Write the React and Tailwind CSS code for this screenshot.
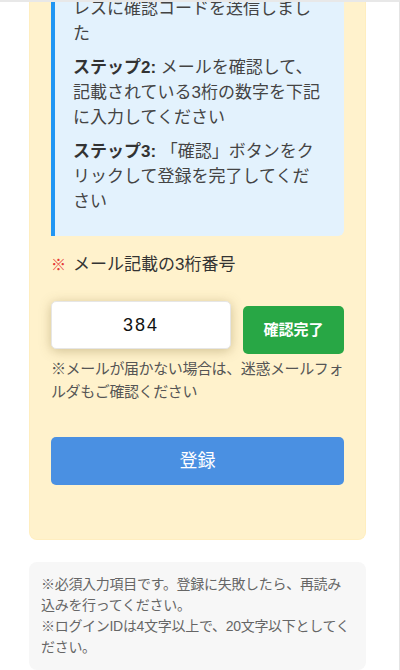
import React from "react";

const font = { fontFamily: '"Liberation Sans", "Noto Sans CJK JP", sans-serif' };

const App = () => {
  return (
    <div
      className="h-[670px] overflow-hidden bg-white border-t-2 border-t-[#e8e8e8] border-r border-r-[#e4e4e4] text-[#333]"
      style={font}
    >
      {/* Form card (scrolled) */}
      <div className="ml-[29px] w-[337px] bg-[#fff2cc] border border-t-0 border-[#ffeec0] rounded-b-lg px-[21px] pb-[54px]">
        {/* Steps */}
        <div className="bg-[#e3f2fd] border-l-4 border-[#2196f3] rounded-br-md pl-[18px] pr-[20px] pb-[22px] text-[17px] leading-[25px] text-[#444]">
          <p className="-mt-[6px]">レスに確認コードを送信しました</p>
          <p className="mt-[9px]">
            <b className="font-bold text-[#333]">ステップ2:</b> メールを確認して、記載されている3桁の数字を下記に入力してください
          </p>
          <p className="mt-[9px]">
            <b className="font-bold text-[#333]">ステップ3:</b> 「確認」ボタンをクリックして登録を完了してください
          </p>
        </div>

        {/* Code label */}
        <div className="mt-[16px] flex items-center gap-[7px] text-[17px] leading-[25px]">
          <span className="text-[#e53935] text-[15px]">※</span>
          <span>メール記載の3桁番号</span>
        </div>

        {/* Code input + confirm */}
        <div className="mt-[24px] flex items-start gap-[12px]">
          <div className="w-[180px] h-[48px] bg-white rounded-[5px] border border-[#e6e6e6] shadow-[0_2px_12px_rgba(120,100,40,0.35)] flex items-center justify-center">
            <span className="text-[18px] tracking-[2px] text-[#111]">384</span>
          </div>
          <button className="mt-[5px] w-[101px] h-[48px] bg-[#28a745] rounded-[5px] text-white text-[15px] font-bold">
            確認完了
          </button>
        </div>
        <p className="mt-[3px] text-[15px] leading-[23px] tracking-[-0.4px] text-[#555]">
          ※メールが届かない場合は、迷惑メールフォルダもご確認ください
        </p>

        {/* Submit */}
        <button className="mt-[34px] w-full h-[48px] bg-[#4a90e2] rounded-[5px] text-white text-[18px]">
          登録
        </button>
      </div>

      {/* Notes */}
      <div className="ml-[29px] mt-[22px] w-[337px] bg-[#f7f7f7] rounded-lg px-[12px] pt-[12px] pb-[12px] text-[14px] leading-[21px] tracking-[-0.3px] text-[#666]">
        <p>※必須入力項目です。登録に失敗したら、再読み込みを行ってください。</p>
        <p>※ログインIDは4文字以上で、20文字以下としてください。</p>
      </div>
    </div>
  );
};

export default App;
